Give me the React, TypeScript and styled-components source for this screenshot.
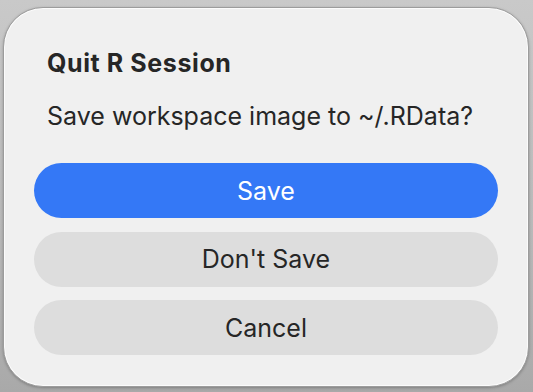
import React from "react";
import styled, { createGlobalStyle } from "styled-components";

const Global = createGlobalStyle`
  html, body { margin: 0; padding: 0; }
  body { font-family: Inter, "Noto Sans", "Liberation Sans", sans-serif; }
`;

const Backdrop = styled.div`
  width: 533px;
  height: 392px;
  box-sizing: border-box;
  padding: 7px 4px 5px 3px;
  background: linear-gradient(180deg, #c9c9c9 0%, #b9b9b9 60%, #a9a9a9 100%);
  display: flex;
`;

const Dialog = styled.div`
  flex: 1;
  box-sizing: border-box;
  background: #f0f0f0;
  border-radius: 40px;
  border: 1px solid #9c9c9c;
  box-shadow: inset 0 0 0 1px rgba(255, 255, 255, 0.75), 0 1px 3px rgba(0, 0, 0, 0.25);
  padding: 40px 30px 0 30px;
  display: flex;
  flex-direction: column;
`;

const Title = styled.h1`
  margin: 0 0 23px 13px;
  font-size: 25px;
  line-height: 30px;
  font-weight: 700;
  letter-spacing: 0.6px;
  color: #262626;
`;

const Message = styled.p`
  margin: 0 0 32px 13px;
  font-size: 25px;
  line-height: 30px;
  font-weight: 400;
  color: #262626;
`;

const Buttons = styled.div`
  display: flex;
  flex-direction: column;
  gap: 13.5px;
`;

const Button = styled.button<{ $primary?: boolean }>`
  height: 55px;
  border: none;
  border-radius: 28px;
  font-family: inherit;
  font-size: 25px;
  font-weight: 400;
  display: flex;
  align-items: center;
  justify-content: center;
  padding: 0;
  background: ${(p) => (p.$primary ? "#3478f6" : "#dddddd")};
  color: ${(p) => (p.$primary ? "#ffffff" : "#262626")};
`;

export default function App() {
  return (
    <>
      <Global />
      <Backdrop>
        <Dialog>
          <Title>Quit R Session</Title>
          <Message>Save workspace image to ~/.RData?</Message>
          <Buttons>
            <Button $primary>Save</Button>
            <Button>Don't Save</Button>
            <Button>Cancel</Button>
          </Buttons>
        </Dialog>
      </Backdrop>
    </>
  );
}
